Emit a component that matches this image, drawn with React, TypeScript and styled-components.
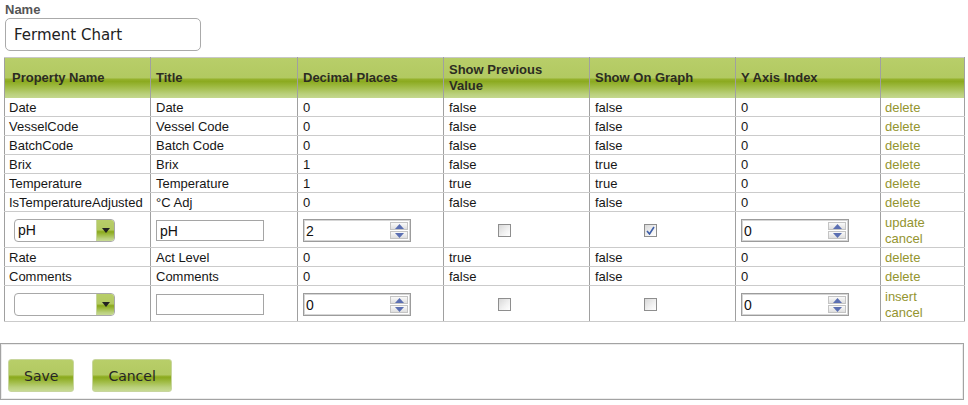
import React from 'react';
import styled, { createGlobalStyle } from 'styled-components';

const GlobalStyle = createGlobalStyle`
  html, body { margin: 0; padding: 0; background: #fff; }
  body { font-family: "Liberation Sans", Arial, sans-serif; font-size: 13px; color: #161616; }
`;

const green = `linear-gradient(to bottom, #b8ce69 0%, #b2c961 48%, #95b12c 52%, #8baa1f 57%, #a2bd49 72%, #bad07c 88%, #c7da93 100%)`;

const Page = styled.div`
  padding: 2px 0 0 4px;
  width: 960px;
`;

const Label = styled.label`
  display: block;
  margin-left: 1px;
  font-weight: bold;
  font-size: 13px;
  line-height: 16px;
  color: #555;
`;

const NameInput = styled.input`
  display: block;
  box-sizing: border-box;
  margin: 0 0 0 1px;
  width: 196px;
  height: 33px;
  padding: 1px 0 0 8px;
  border: 1px solid #aaa;
  border-radius: 5px;
  font-family: "DejaVu Sans", Verdana, sans-serif;
  font-size: 15px;
  color: #222;
  outline: none;
`;

const Table = styled.table`
  margin-top: 6px;
  width: 960px;
  table-layout: fixed;
  border-collapse: collapse;
  border-left: 1px solid #a0a0a0;
  border-right: 1px solid #a0a0a0;
`;

const HeadRow = styled.tr`
  background: ${green};
`;

const HeadCell = styled.th<{ $first?: boolean }>`
  height: 40px;
  padding: 0 ${(p) => (p.$first ? '4px 0 7px' : '4px 0 5px')};
  text-align: left;
  font-weight: bold;
  font-size: 13px;
  line-height: 16px;
  color: #2c2c22;
  border-top: 1px solid #c8c8c8;
  border-right: 1px solid #a0a0a0;
  vertical-align: middle;
`;

const Row = styled.tr<{ $tall?: boolean }>`
  height: ${(p) => (p.$tall ? '36px' : '18px')};
`;

const Cell = styled.td<{ $first?: boolean }>`
  padding: 2px 4px 0 ${(p) => (p.$first ? '4px' : '5px')};
  height: 16px;
  line-height: 16px;
  white-space: nowrap;
  overflow: hidden;
  border-bottom: 1px solid #cbcbcb;
  border-right: 1px solid #a0a0a0;
  vertical-align: middle;
`;

const CheckCell = styled(Cell)`
  padding-left: 54px;
`;

const LinkCell = styled(Cell)`
  padding-left: 4px;
  line-height: 16px;
`;

const ActionLink = styled.a`
  display: block;
  color: #94942f;
  text-decoration: none;
  cursor: pointer;
`;

const SelectBox = styled.div`
  display: flex;
  box-sizing: border-box;
  margin-left: 5px;
  width: 101px;
  height: 23px;
  border: 1px solid #a8a8a8;
  border-radius: 4px;
  overflow: hidden;
  background: #fff;
`;

const SelectValue = styled.span`
  flex: 1;
  padding-left: 3px;
  line-height: 21px;
  font-size: 14px;
  color: #111;
`;

const SelectArrow = styled.span`
  display: flex;
  align-items: center;
  justify-content: center;
  width: 17px;
  background: ${green};
  border-left: 1px solid #c7d79a;
`;

const TextBox = styled.input`
  display: block;
  box-sizing: border-box;
  margin: 0;
  width: 108px;
  height: 21px;
  padding: 0 0 0 3px;
  border: 1px solid #a5a5a5;
  font-family: "Liberation Sans", Arial, sans-serif;
  font-size: 14px;
  color: #111;
  outline: none;
`;

const SpinBox = styled.div`
  display: flex;
  align-items: center;
  box-sizing: border-box;
  width: 108px;
  height: 23px;
  border: 1px solid #9c9c9c;
  box-shadow: inset 0 0 0 1px #d6d6d6;
  background: #fff;
`;

const SpinValue = styled.span`
  flex: 1;
  padding-left: 2px;
  font-size: 14px;
  line-height: 20px;
  color: #111;
`;

const SpinButtons = styled.div`
  display: flex;
  flex-direction: column;
  gap: 1px;
  width: 18px;
  margin-right: 2px;
`;

const SpinButton = styled.span`
  display: flex;
  align-items: center;
  justify-content: center;
  box-sizing: border-box;
  height: 8px;
  border: 1px solid #c4c4c4;
  background: linear-gradient(to bottom, #fafafa, #dedede);
`;

const Check = styled.span<{ $on?: boolean }>`
  display: flex;
  align-items: center;
  justify-content: center;
  box-sizing: border-box;
  width: 13px;
  height: 13px;
  border: 1px solid #8e8e8e;
  background: linear-gradient(135deg, #d8d8d8 0%, #f2f2f2 60%, #ffffff 100%);
`;

const Footer = styled.div`
  display: flex;
  gap: 18px;
  box-sizing: border-box;
  width: 964px;
  margin-top: 21px;
  padding: 15px 7px 7px;
  border: 1px solid #a3a3a3;
  box-shadow: inset 0 0 0 1px #ececec;
`;

const Button = styled.button`
  box-sizing: border-box;
  height: 33px;
  padding: 0 15px;
  border: 1px solid #c8d69e;
  border-radius: 3px;
  background: ${green};
  font-family: "DejaVu Sans", Verdana, sans-serif;
  font-size: 14px;
  color: #262626;
  cursor: pointer;
`;

const Arrow = () => (
  <svg width="8" height="5" viewBox="0 0 8 5">
    <path d="M0 0 L8 0 L4 5 Z" fill="#222" />
  </svg>
);

const Tri = ({ up }: { up?: boolean }) => (
  <svg width="9" height="5" viewBox="0 0 9 5">
    <path d={up ? 'M0 5 L9 5 L4.5 0 Z' : 'M0 0 L9 0 L4.5 5 Z'} fill="#5b6fb2" />
  </svg>
);

const Spinner = ({ value }: { value: string }) => (
  <SpinBox>
    <SpinValue>{value}</SpinValue>
    <SpinButtons>
      <SpinButton><Tri up /></SpinButton>
      <SpinButton><Tri /></SpinButton>
    </SpinButtons>
  </SpinBox>
);

const CheckBox = ({ on }: { on?: boolean }) => (
  <Check $on={on}>
    {on && (
      <svg width="9" height="9" viewBox="0 0 9 9">
        <path d="M1 5 L3.5 8 L8 1" fill="none" stroke="#3d5ea8" strokeWidth="1.6" />
      </svg>
    )}
  </Check>
);

type Item = { prop: string; title: string; dec: string; prev: string; graph: string; y: string };

const top: Item[] = [
  { prop: 'Date', title: 'Date', dec: '0', prev: 'false', graph: 'false', y: '0' },
  { prop: 'VesselCode', title: 'Vessel Code', dec: '0', prev: 'false', graph: 'false', y: '0' },
  { prop: 'BatchCode', title: 'Batch Code', dec: '0', prev: 'false', graph: 'false', y: '0' },
  { prop: 'Brix', title: 'Brix', dec: '1', prev: 'false', graph: 'true', y: '0' },
  { prop: 'Temperature', title: 'Temperature', dec: '1', prev: 'true', graph: 'true', y: '0' },
  { prop: 'IsTemperatureAdjusted', title: '°C Adj', dec: '0', prev: 'false', graph: 'false', y: '0' },
];

const bottom: Item[] = [
  { prop: 'Rate', title: 'Act Level', dec: '0', prev: 'true', graph: 'false', y: '0' },
  { prop: 'Comments', title: 'Comments', dec: '0', prev: 'false', graph: 'false', y: '0' },
];

const DataRow = ({ item }: { item: Item }) => (
  <Row>
    <Cell $first>{item.prop}</Cell>
    <Cell>{item.title}</Cell>
    <Cell>{item.dec}</Cell>
    <Cell>{item.prev}</Cell>
    <Cell>{item.graph}</Cell>
    <Cell>{item.y}</Cell>
    <LinkCell><ActionLink>delete</ActionLink></LinkCell>
  </Row>
);

const EditRow = ({
  prop, title, dec, prev, graph, y, action,
}: { prop: string; title: string; dec: string; prev: boolean; graph: boolean; y: string; action: string }) => (
  <Row $tall>
    <Cell $first>
      <SelectBox>
        <SelectValue>{prop}</SelectValue>
        <SelectArrow><Arrow /></SelectArrow>
      </SelectBox>
    </Cell>
    <Cell><TextBox defaultValue={title} /></Cell>
    <Cell><Spinner value={dec} /></Cell>
    <CheckCell><CheckBox on={prev} /></CheckCell>
    <CheckCell><CheckBox on={graph} /></CheckCell>
    <Cell><Spinner value={y} /></Cell>
    <LinkCell>
      <ActionLink>{action}</ActionLink>
      <ActionLink>cancel</ActionLink>
    </LinkCell>
  </Row>
);

export default function App() {
  return (
    <>
      <GlobalStyle />
      <Page>
        <Label>Name</Label>
        <NameInput defaultValue="Ferment Chart" />
        <Table>
          <colgroup>
            <col style={{ width: 146 }} />
            <col style={{ width: 147 }} />
            <col style={{ width: 146 }} />
            <col style={{ width: 146 }} />
            <col style={{ width: 146 }} />
            <col style={{ width: 145 }} />
            <col style={{ width: 84 }} />
          </colgroup>
          <thead>
            <HeadRow>
              <HeadCell $first>Property Name</HeadCell>
              <HeadCell>Title</HeadCell>
              <HeadCell>Decimal Places</HeadCell>
              <HeadCell>Show Previous<br />Value</HeadCell>
              <HeadCell>Show On Graph</HeadCell>
              <HeadCell>Y Axis Index</HeadCell>
              <HeadCell />
            </HeadRow>
          </thead>
          <tbody>
            {top.map((it) => <DataRow key={it.prop} item={it} />)}
            <EditRow prop="pH" title="pH" dec="2" prev={false} graph={true} y="0" action="update" />
            {bottom.map((it) => <DataRow key={it.prop} item={it} />)}
            <EditRow prop="" title="" dec="0" prev={false} graph={false} y="0" action="insert" />
          </tbody>
        </Table>
      </Page>
      <Footer>
        <Button>Save</Button>
        <Button>Cancel</Button>
      </Footer>
    </>
  );
}
